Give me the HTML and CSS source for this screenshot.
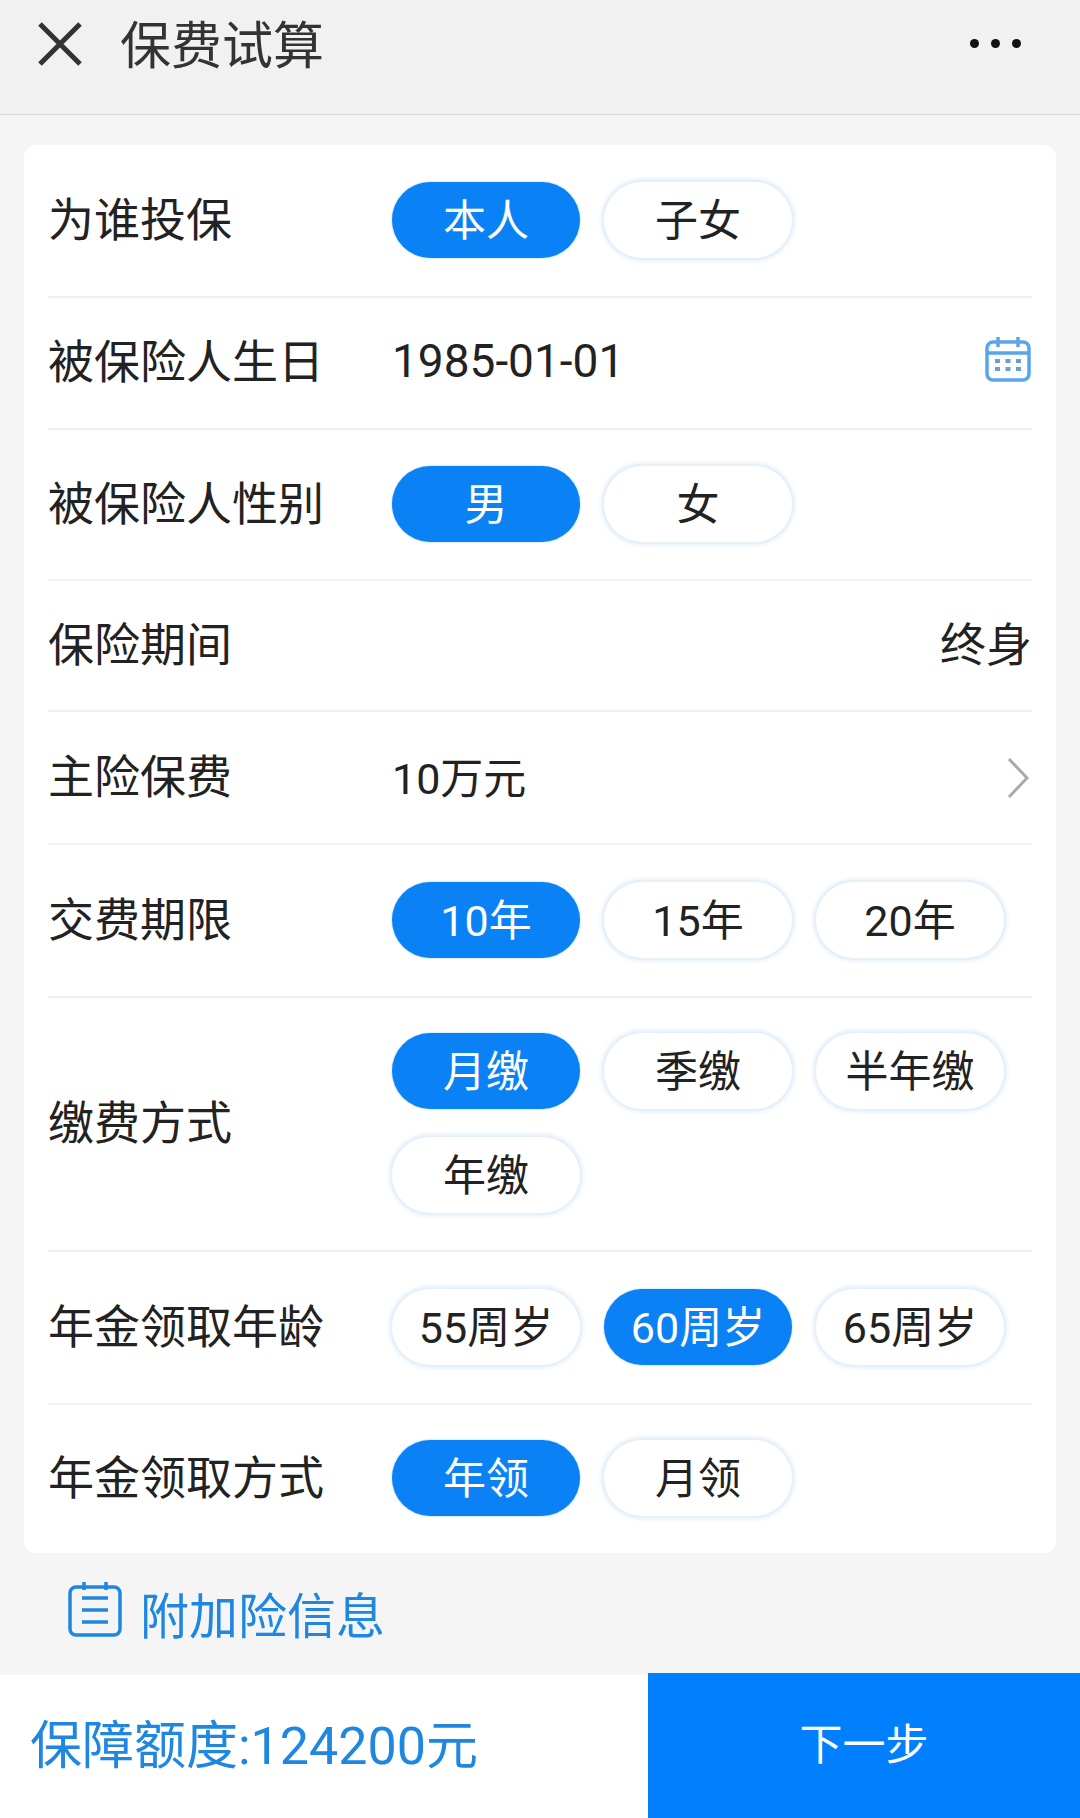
FILE: index.html
```html
<!DOCTYPE html>
<html lang="zh-CN">
<head>
    <meta charset="UTF-8">
    <title>保费试算</title>
    <link rel="stylesheet" href="styles.css">
</head>
<body>
    <div class="page">
        <!--顶部标题栏-->
        <div class="header">
            <svg class="close" width="46" height="46" viewBox="0 0 46 46">
                <path d="M3 3L43 43M43 3L3 43" fill="none" stroke="#333" stroke-width="5"/>
            </svg>
            <span class="title">保费试算</span>
            <div class="more"><i></i><i></i><i></i></div>
        </div>

        <div class="main">
            <div class="card">
                <div class="row row-a">
                    <div class="label">为谁投保</div>
                    <div class="pills">
                        <span class="pill current">本人</span>
                        <span class="pill">子女</span>
                    </div>
                </div>
                <div class="row row-b">
                    <div class="label">被保险人生日</div>
                    <div class="value">1985-01-01</div>
                    <svg class="calendar" width="46" height="46" viewBox="0 0 46 46">
                        <rect x="2" y="6" width="42" height="38" rx="6" fill="none" stroke="#5aa5ea" stroke-width="3.5"/>
                        <path d="M2 17H44" stroke="#5aa5ea" stroke-width="3.5"/>
                        <path d="M13 1V11M33 1V11" stroke="#5aa5ea" stroke-width="3.5"/>
                        <path d="M10 25H15M20.500 25H25.500M31 25H36M10 33H15M20.500 33H25.500M31 33H36" stroke="#6a9fd6" stroke-width="4"/>
                    </svg>
                </div>
                <div class="row row-a short">
                    <div class="label">被保险人性别</div>
                    <div class="pills">
                        <span class="pill current">男</span>
                        <span class="pill">女</span>
                    </div>
                </div>
                <div class="row row-b short">
                    <div class="label">保险期间</div>
                    <div class="value-right">终身</div>
                </div>
                <div class="row row-b tall">
                    <div class="label">主险保费</div>
                    <div class="value small">10万元</div>
                    <svg class="arrow" width="24" height="42" viewBox="0 0 24 42">
                        <path d="M3 2L21 21L3 40" fill="none" stroke="#aaa" stroke-width="3"/>
                    </svg>
                </div>
                <div class="row row-a">
                    <div class="label">交费期限</div>
                    <div class="pills">
                        <span class="pill current">10年</span>
                        <span class="pill">15年</span>
                        <span class="pill">20年</span>
                    </div>
                </div>
                <div class="row row-c">
                    <div class="label">缴费方式</div>
                    <div class="pills">
                        <span class="pill current">月缴</span>
                        <span class="pill">季缴</span>
                        <span class="pill">半年缴</span>
                        <span class="pill">年缴</span>
                    </div>
                </div>
                <div class="row row-a">
                    <div class="label">年金领取年龄</div>
                    <div class="pills">
                        <span class="pill">55周岁</span>
                        <span class="pill current">60周岁</span>
                        <span class="pill">65周岁</span>
                    </div>
                </div>
                <div class="row row-a last">
                    <div class="label">年金领取方式</div>
                    <div class="pills">
                        <span class="pill current">年领</span>
                        <span class="pill">月领</span>
                    </div>
                </div>
            </div>

            <div class="extra">
                <svg width="54" height="56" viewBox="0 0 54 56">
                    <rect x="2" y="6" width="50" height="48" rx="6" fill="none" stroke="#1f87e0" stroke-width="3.5"/>
                    <path d="M16 1V9M38 1V9M14 17H40M14 29H40M14 41H40" stroke="#1f87e0" stroke-width="3.5"/>
                </svg>
                <span>附加险信息</span>
            </div>
        </div>

        <!--底部栏-->
        <div class="footer">
            <div class="amount">保障额度:124200元</div>
            <div class="next">下一步</div>
        </div>
    </div>
</body>
</html>
```
FILE: styles.css
```css
*{
    margin: 0;
    padding: 0;
    box-sizing: border-box;
}
body{
    font-family: "Roboto", "Noto Sans CJK SC", sans-serif;
    background-color: #f5f5f6;
    color: #222;
}
.page{
    width: 1080px;
    height: 1818px;
    display: flex;
    flex-direction: column;
    overflow: hidden;
}
.header{
    height: 115px;
    flex: none;
    display: flex;
    align-items: center;
    padding: 0 59px 27px 37px;
    background-color: #f1f1f1;
    border-bottom: 1px solid #d9d9d9;
}
.title{
    margin: -4px 0 0 37px;
    font-size: 51px;
    color: #333;
}
.more{
    margin-left: auto;
    display: flex;
    gap: 12px;
}
.more i{
    width: 9px;
    height: 9px;
    border-radius: 50%;
    background-color: #111;
}
.main{
    flex: 1;
    padding: 30px 24px 0;
}
.card{
    background-color: #fff;
    border-radius: 12px;
    padding: 0 24px;
}
.row{
    display: flex;
    align-items: center;
    border-bottom: 2px solid #f0f0f0;
}
.row-a{
    height: 153px;
}
.row-a.short{
    height: 151px;
}
.row-b{
    height: 132px;
}
.row-b.short{
    height: 131px;
}
.row-b.tall{
    height: 133px;
}
.row-c{
    height: 254px;
}
.row-a.last{
    border-bottom: none;
    height: 148px;
}
.label{
    width: 344px;
    flex: none;
    margin-top: -10px;
    font-size: 46px;
    color: #222;
}
.pills{
    flex: 1;
    display: flex;
    flex-wrap: wrap;
    gap: 28px 24px;
    margin-top: -2px;
}
.pill{
    width: 188px;
    height: 76px;
    padding-bottom: 6px;
    display: flex;
    align-items: center;
    justify-content: center;
    font-size: 43px;
    color: #222;
    background-color: #fff;
    border-radius: 38px;
    box-shadow: 0 0 0 2px #e6f0f9, 0 0 4px 3px #e3eef8;
}
.pill.current{
    color: #fff;
    background-color: #0a82f5;
    box-shadow: 0 0 2px #8cc4f8;
}
.value{
    flex: 1;
    margin-top: -5px;
    font-size: 46px;
    color: #222;
}
.value.small{
    font-size: 43px;
}
.value-right{
    flex: 1;
    margin-top: -10px;
    text-align: right;
    font-size: 46px;
}
.calendar{
    flex: none;
    margin: -8px 1px 0 0;
}
.arrow{
    flex: none;
    margin: 0 2px 0 0;
}
.extra{
    display: flex;
    align-items: center;
    gap: 18px;
    padding: 24px 0 0 44px;
    font-size: 49px;
    color: #1f87e0;
}
.extra svg{
    margin-top: -8px;
}
.footer{
    height: 143px;
    flex: none;
    display: flex;
    background-color: #fff;
}
.amount{
    width: 648px;
    padding-left: 30px;
    font-size: 52px;
    line-height: 143px;
    color: #1f87e0;
    white-space: nowrap;
}
.next{
    flex: 1;
    margin-top: -2px;
    text-align: center;
    font-size: 43px;
    line-height: 145px;
    color: #fff;
    background-color: #0080ff;
}
```
